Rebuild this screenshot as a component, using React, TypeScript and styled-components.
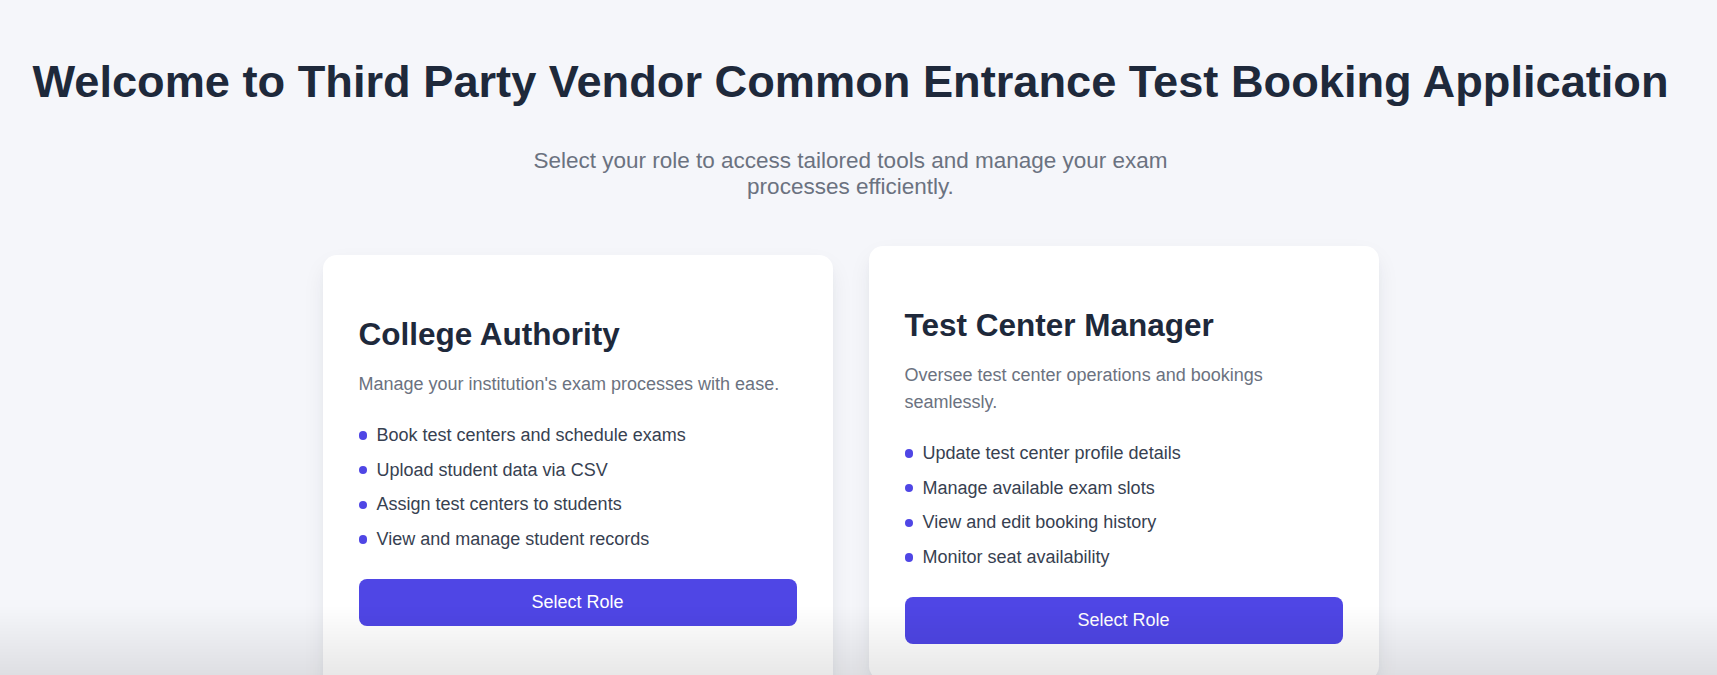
import React from "react";
import styled, { createGlobalStyle } from "styled-components";

const GlobalStyle = createGlobalStyle`
  html, body {
    margin: 0;
    padding: 0;
    overflow: hidden;
    background-color: #f5f6fa;
  }

  body {
    font-family: "Liberation Sans", Arial, sans-serif;
  }
`;

const Page = styled.div`
  display: flex;
  flex-direction: column;
  align-items: center;
  padding: 55px 16px 40px 0;
  min-height: 100vh;
  box-sizing: border-box;
`;

const Heading = styled.h1`
  margin: 0 0 39px;
  font-size: 45.2px;
  line-height: 54px;
  font-weight: 700;
  color: #1e293b;
  text-align: center;
  white-space: nowrap;
`;

const Subtitle = styled.p`
  margin: 0 0 55px;
  max-width: 672px;
  font-size: 22.5px;
  line-height: 26px;
  color: #6b7280;
  text-align: center;
`;

const CardGrid = styled.div`
  display: grid;
  grid-template-columns: repeat(2, 510px);
  gap: 36px;
  align-items: stretch;
`;

const Card = styled.div<{ $raised?: boolean }>`
  display: flex;
  flex-direction: column;
  padding: 36px;
  background-color: #ffffff;
  border-radius: 14px;
  box-shadow: 0 10px 24px -4px rgba(30, 41, 59, 0.1),
    0 4px 10px -4px rgba(30, 41, 59, 0.06);
  transform: ${(p) => (p.$raised ? "translateY(-9px)" : "none")};
  box-sizing: border-box;
`;

const CardTitle = styled.h2`
  margin: 24px 0 18px;
  font-size: 31.5px;
  line-height: 38px;
  font-weight: 700;
  color: #1e293b;
`;

const CardText = styled.p`
  margin: 0 0 24px;
  font-size: 18px;
  line-height: 27px;
  color: #6b7280;
`;

const FeatureList = styled.ul`
  display: flex;
  flex-direction: column;
  gap: 7.7px;
  margin: 0;
  padding: 0;
  list-style: none;
`;

const FeatureItem = styled.li`
  display: flex;
  align-items: center;
  font-size: 18px;
  line-height: 27px;
  color: #374151;

  &::before {
    content: "";
    flex-shrink: 0;
    width: 8.5px;
    height: 8.5px;
    margin-right: 9.5px;
    border-radius: 50%;
    background-color: #4f46e5;
  }
`;

const SelectButton = styled.button`
  margin-top: 25.5px;
  width: 100%;
  height: 47px;
  border: none;
  border-radius: 8px;
  background-color: #4f46e5;
  color: #ffffff;
  font-family: inherit;
  font-size: 18px;
  cursor: pointer;

  &:hover {
    background-color: #4338ca;
  }
`;

// soft dark fade along the bottom edge of the frame
const BottomShade = styled.div`
  position: fixed;
  left: 0;
  right: 0;
  bottom: 0;
  height: 70px;
  background: linear-gradient(
    to bottom,
    rgba(0, 0, 0, 0),
    rgba(0, 0, 0, 0.09)
  );
  pointer-events: none;
`;

interface Role {
  title: string;
  description: string;
  features: string[];
}

const roles: Role[] = [
  {
    title: "College Authority",
    description: "Manage your institution's exam processes with ease.",
    features: [
      "Book test centers and schedule exams",
      "Upload student data via CSV",
      "Assign test centers to students",
      "View and manage student records",
    ],
  },
  {
    title: "Test Center Manager",
    description: "Oversee test center operations and bookings seamlessly.",
    features: [
      "Update test center profile details",
      "Manage available exam slots",
      "View and edit booking history",
      "Monitor seat availability",
    ],
  },
];

function RoleCard({ role, raised }: { role: Role; raised?: boolean }) {
  return (
    <Card $raised={raised}>
      <CardTitle>{role.title}</CardTitle>
      <CardText>{role.description}</CardText>
      <FeatureList>
        {role.features.map((f) => (
          <FeatureItem key={f}>{f}</FeatureItem>
        ))}
      </FeatureList>
      <SelectButton>Select Role</SelectButton>
    </Card>
  );
}

export default function App() {
  return (
    <>
      <GlobalStyle />
      <Page>
        <Heading>
          Welcome to Third Party Vendor Common Entrance Test Booking Application
        </Heading>
        <Subtitle>
          Select your role to access tailored tools and manage your exam
          processes efficiently.
        </Subtitle>
        <CardGrid>
          {roles.map((role, i) => (
            <RoleCard key={role.title} role={role} raised={i === 1} />
          ))}
        </CardGrid>
      </Page>
      <BottomShade />
    </>
  );
}
